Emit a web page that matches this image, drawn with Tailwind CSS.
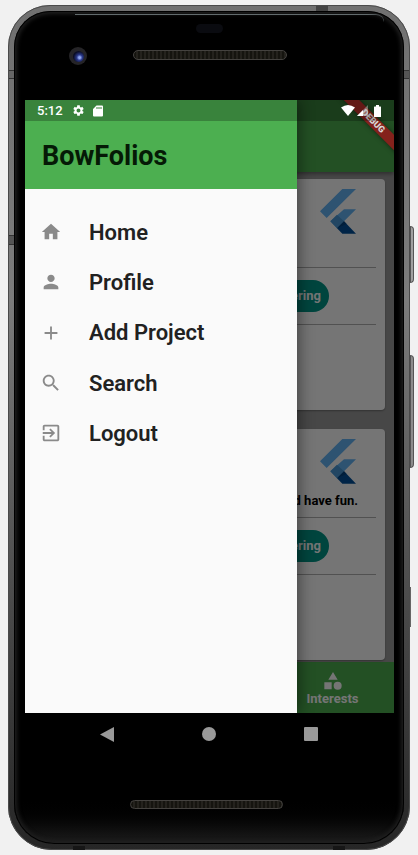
<!DOCTYPE html>
<html lang="en">
<head>
<meta charset="utf-8">
<meta name="viewport" content="width=device-width, initial-scale=1">
<title>BowFolios</title>
<script src="https://cdn.jsdelivr.net/npm/@tailwindcss/browser@4"></script>
</head>
<body class="min-h-screen bg-[#f1f1f1] px-2 py-[5px] font-['Roboto',sans-serif]">
<svg class="hidden" aria-hidden="true">
  <symbol id="flutter" viewBox="0 0 108 135">
    <path fill="#64b5f6" d="M67 0h41L20 87 0 67zM72 61h36L51 118 31 97z"/>
    <path fill="#4a9ad8" d="M51 77 72 97 51 118 31 97z"/>
    <path fill="#01509b" d="M51 118 72 97l36 37H67z"/>
    <path fill="#014282" d="M51 118 72 97l8 8z"/>
  </symbol>
</svg>

<!-- Handset frame -->
<div class="relative rounded-t-[42px] rounded-b-[44px] bg-linear-to-b from-[#707070] via-[#7c7c7c] via-35% to-[#262626] p-[6px]">
  <div class="absolute top-[221px] -right-1 h-[57px] w-1 rounded-r-sm border border-[#555] bg-[#a0a0a0]"></div>
  <div class="absolute top-[350px] -right-1 h-[113px] w-1 rounded-r-sm border border-[#555] bg-[#8c8c8c]"></div>
  <div class="absolute top-[582px] -right-px h-10 w-px bg-[#666]"></div>
  <div class="absolute top-[65px] left-0 h-[9px] w-[6px] border-y border-[#333] bg-[#666]"></div>
  <div class="absolute top-[230px] left-0 h-[10px] w-[6px] border-y border-[#333] bg-[#555]"></div>
  <div class="absolute top-[65px] right-0 h-[9px] w-[6px] border-y border-[#333] bg-[#555]"></div>
  <div class="absolute top-0 right-[82px] h-[6px] w-3 bg-[#444]"></div>
  <div class="absolute inset-0 rounded-t-[42px] rounded-b-[44px] border border-[#4a4a4a]"></div>
  <div class="absolute bottom-0 left-[65px] h-1 w-3 bg-[#161616]"></div>
  <div class="absolute right-[65px] bottom-0 h-1 w-3 bg-[#161616]"></div>

  <div class="relative overflow-hidden rounded-t-[36px] rounded-b-[40px] bg-black pr-[10px] pl-[11px]">
    <!-- Top bezel -->
    <div class="relative flex h-[89px] flex-col items-center">
      <div class="absolute top-[3px] right-[10px] left-[50px] h-2 rounded-tr-[20px] border-t border-[#93a2a6]"></div>
      <div class="mt-[13px] h-[9px] w-[27px] rounded-full bg-[#0a0b10]"></div>
      <div class="mt-[17px] h-[10px] w-[154px] rounded-full border border-[#44423f] bg-[repeating-linear-gradient(90deg,#15140f_0_2px,#24221d_2px_4px)]"></div>
      <div class="absolute top-9 left-[44px] flex size-[18px] items-center justify-center rounded-full bg-[#252427]">
        <div class="size-[11px] rounded-full bg-[radial-gradient(circle_at_60%_60%,#8fa5ee_0_10%,#2b3a8c_30%,#0b0d24_65%)]"></div>
      </div>
    </div>

    <!-- Screen -->
    <div class="relative overflow-hidden bg-[#9c9c9c]">
      <div class="h-[72px] bg-[#4caf50] shadow-[0_2px_4px_rgba(0,0,0,.35)]"></div>
      <main class="flex flex-col gap-[19px] px-[9px] pt-[7px] pb-[2px]">
        <article class="rounded bg-white px-[9px] pt-[10px] pb-[85px] shadow-[0_1px_2px_rgba(0,0,0,.3)]">
          <svg class="mr-5 ml-auto h-[45px] w-9" role="img" aria-label="Flutter"><use href="#flutter"/></svg>
          <p class="h-[33px]"></p>
          <hr class="border-[#b0b0b0]">
          <div class="flex justify-end py-3 pr-[47px]">
            <span class="rounded-full bg-[#009688] px-2 text-[13px] leading-8 font-bold text-white">Software Engineering</span>
          </div>
          <hr class="border-[#b0b0b0]">
        </article>
        <article class="rounded bg-white px-[9px] pt-[10px] pb-[85px] shadow-[0_1px_2px_rgba(0,0,0,.3)]">
          <svg class="mr-5 ml-auto h-[45px] w-9" role="img" aria-label="Flutter"><use href="#flutter"/></svg>
          <p class="pr-[18px] text-right text-[13px] leading-[33px] font-bold text-black">and have fun.</p>
          <hr class="border-[#b0b0b0]">
          <div class="flex justify-end py-3 pr-[47px]">
            <span class="rounded-full bg-[#009688] px-2 text-[13px] leading-8 font-bold text-white">Software Engineering</span>
          </div>
          <hr class="border-[#b0b0b0]">
        </article>
      </main>
      <nav class="grid h-[51px] grid-cols-3 bg-[#4caf50]">
        <a href="#interests" class="col-start-3 flex flex-col items-center pt-[10px] text-[13px] leading-[18px] font-bold text-white">
          <svg class="size-[18px]" viewBox="0 0 54 54" fill="currentColor" aria-hidden="true"><path d="M27 0l14 23H13zM1 31h22v21H1z"/><circle cx="41" cy="41" r="12"/></svg>
          Interests
        </a>
      </nav>

      <!-- Scrim, drawer and debug ribbon -->
      <div class="absolute inset-0 bg-black/54"></div>
      <aside class="absolute inset-y-0 left-0 w-[272px] bg-[#fafafa] shadow-[2px_0_14px_rgba(0,0,0,.45)]">
        <header class="flex h-[89px] items-center bg-[#4caf50] px-[17px] pt-[23px]">
          <h1 class="text-[27px] leading-8 font-bold text-[#051a06]">BowFolios</h1>
        </header>
        <nav class="flex flex-col pt-[18px] text-[22px] font-semibold text-[#212121]">
          <a href="#home" class="flex h-[50px] items-center gap-[27px] pl-[15px]"><svg class="size-[22px] text-[#8a8a8a]" viewBox="0 0 24 24" fill="currentColor" aria-hidden="true"><path d="M10 20v-6h4v6h5v-8h3L12 3 2 12h3v8z"/></svg>Home</a>
          <a href="#profile" class="flex h-[50px] items-center gap-[27px] pl-[15px]"><svg class="size-[22px] text-[#8a8a8a]" viewBox="0 0 24 24" fill="currentColor" aria-hidden="true"><path d="M12 12c2.21 0 4-1.79 4-4s-1.79-4-4-4-4 1.790-4 4 1.790 4 4 4zm0 2c-2.670 0-8 1.340-8 4v2h16v-2c0-2.660-5.330-4-8-4z"/></svg>Profile</a>
          <a href="#add" class="flex h-[51px] items-center gap-[27px] pl-[15px]"><svg class="size-[22px] text-[#8a8a8a]" viewBox="0 0 24 24" fill="currentColor" aria-hidden="true"><path d="M19 13h-6v6h-2v-6H5v-2h6V5h2v6h6z"/></svg>Add Project</a>
          <a href="#search" class="flex h-[50px] items-center gap-[27px] pl-[15px]"><svg class="size-[22px] text-[#8a8a8a]" viewBox="0 0 24 24" fill="currentColor" aria-hidden="true"><path d="M15.500 14h-.79l-.28-.27C15.410 12.590 16 11.110 16 9.500 16 5.910 13.090 3 9.500 3S3 5.910 3 9.500 5.910 16 9.500 16c1.610 0 3.090-.59 4.230-1.570l.27.28v.79l5 4.990L20.490 19l-4.990-5zm-6 0C7.010 14 5 11.990 5 9.500S7.010 5 9.500 5 14 7.010 14 9.500 11.990 14 9.500 14z"/></svg>Search</a>
          <a href="#logout" class="flex h-[50px] items-center gap-[27px] pl-[15px]"><svg class="size-[22px] text-[#8a8a8a]" viewBox="0 0 24 24" fill="currentColor" aria-hidden="true"><path d="M10.090 15.590 11.500 17l5-5-5-5-1.410 1.410L12.670 11H3v2h9.670l-2.580 2.590zM19 3H5c-1.110 0-2 .9-2 2v4h2V5h14v14H5v-4H3v4c0 1.100.89 2 2 2h14c1.100 0 2-.9 2-2V5c0-1.100-.9-2-2-2z"/></svg>Logout</a>
        </nav>
      </aside>
      <div class="absolute top-4 -right-5 h-[11px] w-[82px] rotate-45 bg-[#84221c] text-center text-[9px] leading-[11px] font-black text-[#d8d8d8] shadow-[0_0_5px_rgba(0,0,0,.5)]">DEBUG</div>
      <!-- Status bar -->
      <div class="absolute inset-x-0 top-0 flex h-[21px] items-center bg-black/25 px-3 text-white">
        <span class="text-[13px] leading-5 font-medium">5:12</span>
        <svg class="ml-[9px] size-[13px]" viewBox="0 0 24 24" fill="currentColor" aria-hidden="true"><path d="M19.140 12.940c.04-.3.060-.61.060-.94 0-.32-.02-.64-.07-.94l2.030-1.580c.18-.14.230-.41.120-.61l-1.920-3.320c-.12-.22-.37-.29-.59-.22l-2.390.96c-.5-.38-1.030-.7-1.620-.94L14.400 2.810c-.04-.24-.24-.41-.48-.41h-3.840c-.24 0-.43.17-.47.41L9.250 5.350C8.660 5.590 8.120 5.920 7.630 6.290L5.240 5.330c-.22-.08-.47 0-.59.22L2.740 8.870c-.12.21-.08.47.12.61l2.030 1.580c-.05.3-.09.63-.09.94s.02.64.07.94l-2.030 1.580c-.18.14-.23.41-.12.61l1.920 3.320c.12.22.37.29.59.22l2.390-.96c.5.38 1.030.7 1.620.94l.36 2.540c.05.24.24.41.48.41h3.840c.24 0 .44-.17.47-.41l.36-2.540c.59-.24 1.130-.56 1.620-.94l2.390.96c.22.08.47 0 .59-.22l1.920-3.320c.12-.22.070-.47-.12-.61zM12 15.600c-1.980 0-3.600-1.620-3.600-3.600s1.620-3.600 3.600-3.600 3.600 1.620 3.600 3.600-1.620 3.600-3.600 3.600z"/></svg>
        <svg class="ml-2 h-3 w-[10px]" viewBox="0 0 20 24" fill="currentColor" aria-hidden="true"><path fill-rule="evenodd" d="M7 1h11q2 0 2 2v18q0 2-2 2H2q-2 0-2-2V8zM7 4v4h2V4zM11 4v4h2V4zM15 4v4h2V4z"/></svg>
        <svg class="ml-auto h-[11px] w-[14px]" viewBox="0 0 28 22" fill="currentColor" aria-hidden="true"><path d="M0 5Q14-5 28 5L14 22z"/></svg>
        <svg class="ml-[2px] size-[11px]" viewBox="0 0 22 22" fill="currentColor" aria-hidden="true"><path fill-opacity=".35" d="M22 0v22H0z"/><path d="M12 10v12H0z"/></svg>
        <svg class="mr-[1px] ml-[6px] h-3 w-[7px]" viewBox="0 0 14 24" fill="currentColor" aria-hidden="true"><path d="M4 0h6v3h3q1 0 1 1v19q0 1-1 1H1q-1 0-1-1V4q0-1 1-1h3z"/></svg>
      </div>
    </div>

    <!-- System navigation -->
    <nav class="flex h-[42px] items-center justify-center gap-[88px] pr-[2px] text-[#999]">
      <button type="button" aria-label="Back"><svg class="block h-[15px] w-[14px]" viewBox="0 0 14 15" fill="currentColor"><path d="M14 0v15L0 7.500z"/></svg></button>
      <button type="button" aria-label="Home" class="size-[14px] rounded-full bg-[#999]"></button>
      <button type="button" aria-label="Recents" class="size-[14px] rounded-[1px] bg-[#999]"></button>
    </nav>

    <!-- Bottom bezel -->
    <div class="-mr-[10px] -ml-[11px] flex h-[89px] justify-center bg-linear-to-b from-black from-45% to-[#1e1e1e] pt-[45px] pr-[5px]">
      <div class="h-[9px] w-[153px] rounded-full border border-[#44423f] bg-[repeating-linear-gradient(90deg,#15140f_0_2px,#24221d_2px_4px)]"></div>
    </div>
    <div class="pointer-events-none absolute inset-0 rounded-t-[36px] rounded-b-[40px] shadow-[inset_0_0_0_1px_#000,inset_0_0_4px_3px_#1f1f1f]"></div>
  </div>
</div>
</body>
</html>
